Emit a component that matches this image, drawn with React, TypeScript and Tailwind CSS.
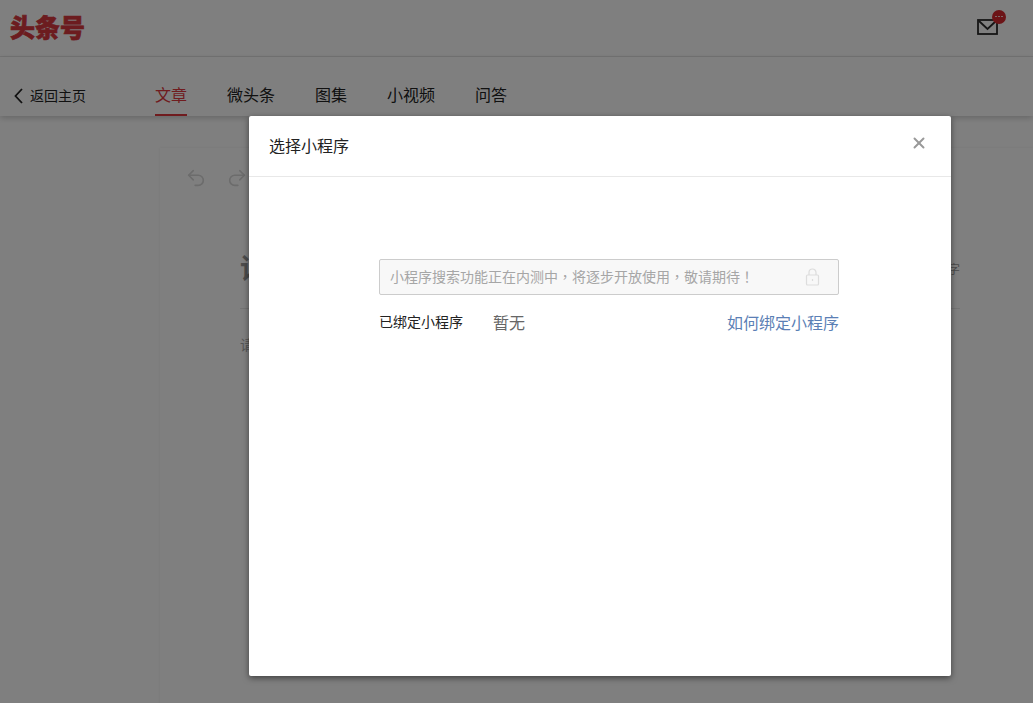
import { Redo2, Undo2, X } from "lucide-react";

const tabs = ["文章", "微头条", "图集", "小视频", "问答"];

export default function App() {
  return (
    <div className="relative h-[703px] overflow-hidden bg-white font-['Liberation_Sans','Noto_Sans_CJK_SC',sans-serif] text-[#222]">
      <header className="flex h-[57px] items-center justify-between border-b border-[#e8e8e8] pl-[10px] pr-[35px]">
        <span className="text-[25px] leading-none font-black text-[#d8383e] [-webkit-text-stroke:0.7px_#d8383e]">头条号</span>
        <div className="relative mb-[3px]">
          <svg width="21" height="16" viewBox="0 0 21 16" fill="none" stroke="#2a2a2a" strokeWidth="1.8" className="block">
            <rect x="1" y="1" width="19" height="14" />
            <path d="M2 2l8.5 8L19 2" />
          </svg>
          <span className="absolute -top-[9px] -right-[8px] flex h-[14px] w-[14px] items-center justify-center gap-[1px] rounded-full bg-[#d8282e]">
            <i className="h-[1px] w-[2px] bg-white/80" />
            <i className="h-[1px] w-[2px] bg-white/80" />
            <i className="h-[1px] w-[2px] bg-white/80" />
          </span>
        </div>
      </header>

      <nav className="relative flex h-[59px] items-center bg-white shadow-[0_2px_6px_rgba(0,0,0,0.2)]">
        <a className="flex w-[155px] items-center pt-[19px] pl-[14px] text-[14px] text-[#222]">
          <svg width="9" height="16" viewBox="0 0 9 16" fill="none" stroke="#222" strokeWidth="1.8" className="mr-[7px]">
            <path d="M8 1L1.5 8L8 15" />
          </svg>
          返回主页
        </a>
        <div className="flex h-full items-end gap-[40px]">
          {tabs.map((t, i) => (
            <span
              key={t}
              className={
                i === 0
                  ? "border-b-2 border-[#e0383e] pb-[6px] text-[16px] leading-[25px] text-[#e0383e]"
                  : "border-b-2 border-transparent pb-[6px] text-[16px] leading-[25px] text-[#222]"
              }
            >
              {t}
            </span>
          ))}
        </div>
      </nav>

      <main className="h-full bg-white pt-[32px] pl-[160px]">
        <div className="h-full bg-white shadow-[0_0_3px_rgba(0,0,0,0.08)]">
          <div className="flex h-[62px] items-center gap-[19px] pb-[2px] pl-[25px] text-[#d8d8d8]">
            <Undo2 className="h-[22px] w-[22px]" strokeWidth={1.8} />
            <Redo2 className="h-[22px] w-[22px]" strokeWidth={1.8} />
          </div>
          <div className="mt-[38px] mr-[73px] ml-[80px] flex h-[61px] items-start justify-between border-b border-[#e8e8e8]">
            <span className="text-[28px] leading-[44px] font-bold text-[#999]">请输入标题</span>
            <span className="pt-[13px] text-[12px] text-[#999]">0/30 字</span>
          </div>
          <p className="mt-[26px] ml-[80px] text-[14px] text-[#aaa]">请输入正文</p>
        </div>
      </main>

      <div className="absolute inset-0 bg-black/50" />

      <div className="absolute top-[116px] left-[249px] flex h-[560px] w-[702px] flex-col rounded-[2px] bg-white shadow-[0_2px_6px_rgba(0,0,0,0.5)]">
        <div className="flex h-[61px] items-center justify-between border-b border-[#e8e8e8] pr-[23px] pl-[20px]">
          <h2 className="pt-[1px] text-[16px] text-[#222]">选择小程序</h2>
          <X className="mb-[6px] h-[18px] w-[18px] text-[#999]" strokeWidth={2.6} />
        </div>
        <div className="pt-[82px] pr-[112px] pl-[130px]">
          <div className="flex h-[36px] items-center justify-between rounded-[2px] border border-[#cccccc] bg-[#f8f8f8] pr-[18px] pl-[10px]">
            <span className="text-[14px] text-[#a6a6a6]">
              小程序搜索功能正在内测中
              <span className="font-['Noto_Sans_CJK_TC',sans-serif]">，</span>
              将逐步开放使用
              <span className="font-['Noto_Sans_CJK_TC',sans-serif]">，</span>
              敬请期待
              <span className="font-['Noto_Sans_CJK_TC',sans-serif]">！</span>
            </span>
            <svg width="15" height="18" viewBox="0 0 15 18" fill="none" stroke="#dddddd" strokeWidth="1.2">
              <rect x="1.5" y="7" width="12" height="10" rx="1" />
              <path d="M4 7V4.5a3.5 3.5 0 0 1 7 0V7" />
              <path d="M7.5 11v2" />
            </svg>
          </div>
          <div className="mt-[15px] flex items-center">
            <span className="w-[114px] pb-[3px] text-[14px] leading-[24px] text-[#222]">已绑定小程序</span>
            <span className="text-[16px] leading-[24px] text-[#666]">暂无</span>
            <a className="ml-auto text-[16px] leading-[24px] text-[#5b7fb5]">如何绑定小程序</a>
          </div>
        </div>
      </div>
    </div>
  );
}
